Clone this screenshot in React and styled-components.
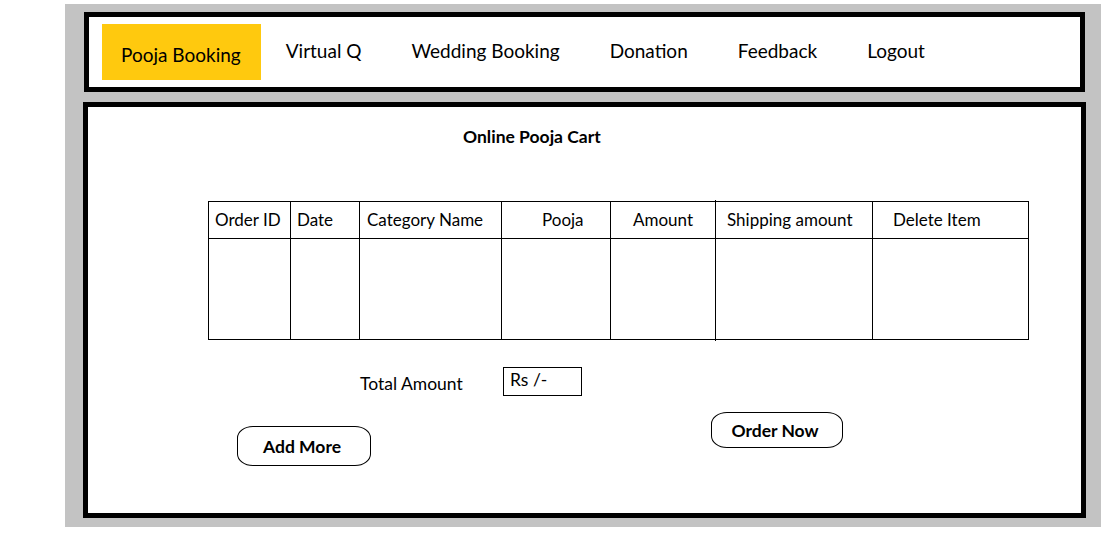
import React from 'react';
import styled, {createGlobalStyle} from 'styled-components';

const GlobalStyle = createGlobalStyle`
  body {
    margin: 0;
    background: #ffffff;
    font-family: Lato, "Open Sans", "Liberation Sans", sans-serif;
    color: #000000;
  }
`;

const Frame = styled.div`
  margin: 4px 0 0 65px;
  width: 1036px;
  height: 523px;
  box-sizing: border-box;
  padding: 8px 15px 9px 18px;
  background: #c3c3c3;
  display: flex;
  flex-direction: column;
  gap: 10px;
`;

const NavBar = styled.nav`
  margin-left: 1px;
  width: 1001px;
  height: 80px;
  box-sizing: border-box;
  border: 5px solid #000;
  background: #fff;
  display: flex;
  align-items: center;
  padding: 0 13px;
`;

const NavItem = styled.div`
  height: 56px;
  display: flex;
  align-items: center;
  box-sizing: border-box;
  padding: ${props => props.$active ? '4px 20px 0 19px' : '0 25px 4px'};
  background: ${props => props.$active ? '#ffc90e' : 'transparent'};
  font-size: 19px;
  white-space: nowrap;
`;

const Main = styled.main`
  width: 1003px;
  flex: 1;
  box-sizing: border-box;
  border: 5px solid #000;
  background: #fff;
  display: flex;
  flex-direction: column;
`;

const Title = styled.div`
  margin: 20px 0 0 375px;
  font-size: 17.5px;
  font-weight: 700;
  line-height: 20px;
`;

const Table = styled.table`
  margin: 54px 0 0 120px;
  width: 821px;
  border-collapse: collapse;
  table-layout: fixed;
  font-size: 17px;
`;

const HeadCell = styled.th`
  position: relative;
  height: 34px;
  padding: 0 0 2px ${props => props.$pad}px;
  border: 1px solid #000;
  font-weight: 400;
  text-align: left;
  white-space: nowrap;

  ${props => props.$tick && `
    &::before {
      content: '';
      position: absolute;
      left: -1px;
      top: -2px;
      width: 1px;
      height: 2px;
      background: #000;
    }
  `}
`;

const BodyCell = styled.td`
  position: relative;
  height: 100px;
  padding: 0;
  border: 1px solid #000;

  ${props => props.$tick && `
    &::after {
      content: '';
      position: absolute;
      left: -1px;
      bottom: -2px;
      width: 1px;
      height: 2px;
      background: #000;
    }
  `}
`;

const TotalRow = styled.div`
  margin: 27px 0 0 272px;
  display: flex;
  align-items: flex-start;
  gap: 39px;
`;

const TotalLabel = styled.div`
  width: 104px;
  margin-top: 6px;
  font-size: 17.5px;
  white-space: nowrap;
`;

const AmountBox = styled.div`
  width: 79px;
  height: 29px;
  box-sizing: border-box;
  border: 1px solid #000;
  padding: 1px 0 0 6px;
  font-size: 17.5px;
`;

const ButtonRow = styled.div`
  margin: 16px 0 0 149px;
  display: flex;
  align-items: flex-start;
  gap: 340px;
`;

const Button = styled.button`
  margin-top: ${props => props.$offset || 0}px;
  width: ${props => props.$w}px;
  height: ${props => props.$h}px;
  border: 1px solid #000;
  border-radius: 16px / 12px;
  background: #fff;
  font-family: inherit;
  font-size: 17.5px;
  font-weight: 700;
  color: #000;
  padding: 0 4px 0 0;
`;

const columns = [
  {label: 'Order ID', width: 82, pad: 6},
  {label: 'Date', width: 69, pad: 6},
  {label: 'Category Name', width: 142, pad: 7},
  {label: 'Pooja', width: 109, pad: 40},
  {label: 'Amount', width: 105, pad: 22},
  {label: 'Shipping amount', width: 157, pad: 11, tick: true},
  {label: 'Delete Item', width: 156, pad: 20},
];

const navLinks = ['Pooja Booking', 'Virtual Q', 'Wedding Booking', 'Donation', 'Feedback', 'Logout'];

export default function App() {
  return (
    <>
      <GlobalStyle/>
      <Frame>
        <NavBar>
          {navLinks.map((link, i) => (
            <NavItem key={link} $active={i === 0}>{link}</NavItem>
          ))}
        </NavBar>
        <Main>
          <Title>Online Pooja Cart</Title>
          <Table>
            <colgroup>
              {columns.map(c => <col key={c.label} style={{width: c.width}}/>)}
            </colgroup>
            <thead>
              <tr>
                {columns.map(c => (
                  <HeadCell key={c.label} $pad={c.pad} $tick={c.tick}>{c.label}</HeadCell>
                ))}
              </tr>
            </thead>
            <tbody>
              <tr>
                {columns.map(c => <BodyCell key={c.label} $tick={c.tick}/>)}
              </tr>
            </tbody>
          </Table>
          <TotalRow>
            <TotalLabel>Total Amount</TotalLabel>
            <AmountBox>Rs /-</AmountBox>
          </TotalRow>
          <ButtonRow>
            <Button $w={134} $h={40} $offset={14}>Add More</Button>
            <Button $w={132} $h={36}>Order Now</Button>
          </ButtonRow>
        </Main>
      </Frame>
    </>
  );
}
